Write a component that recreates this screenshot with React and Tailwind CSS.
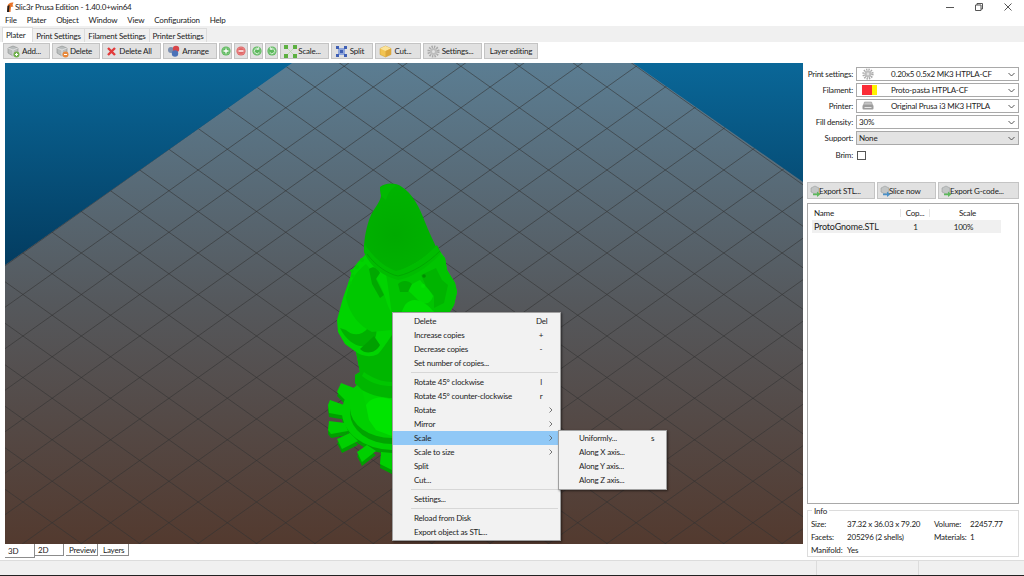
import React from "react";

const FONT = "font-['Lato','Noto_Sans',sans-serif]";

/* ================= SMALL ICONS ================= */
function Cube({ badge }) {
  return (
    <svg width="13" height="13" viewBox="0 0 13 13" className="shrink-0">
      <path d="M1 3l5-2 5 2v5l-5 3-5-3z" fill="#b9bdbd" stroke="#8b8f8f" strokeWidth=".6" />
      <path d="M1 3l5 2 5-2M6 5v6" fill="none" stroke="#efefef" strokeWidth=".7" />
      <circle cx="9.500" cy="9.500" r="3" fill={badge} />
      <path d="M8 9.500h3" stroke="#fff" strokeWidth="1" />
      {badge === "#6fb04a" && <path d="M9.500 8v3" stroke="#fff" strokeWidth="1" />}
    </svg>
  );
}

function CrossIcon() {
  return (
    <svg width="11" height="11" viewBox="0 0 11 11" className="shrink-0">
      <path d="M2 2l7 7M9 2l-7 7" stroke="#e23b3b" strokeWidth="2.400" />
    </svg>
  );
}

function ArrangeIcon() {
  return (
    <svg width="14" height="12" viewBox="0 0 14 12" className="shrink-0">
      <circle cx="4" cy="5" r="3" fill="#7b8fb0" />
      <circle cx="9" cy="4" r="3.200" fill="#d8474a" />
      <circle cx="8" cy="8.500" r="3.200" fill="#4a72b8" />
    </svg>
  );
}

function RoundIcon({ color, glyph }) {
  return (
    <svg width="10" height="10" viewBox="0 0 10 10">
      <circle cx="5" cy="5" r="4.600" fill={color} />
      <circle cx="5" cy="5" r="3.400" fill="none" stroke="#ffffff55" strokeWidth=".6" />
      {glyph === "plus" && <path d="M2.500 5h5M5 2.500v5" stroke="#fff" strokeWidth="1.300" />}
      {glyph === "minus" && <path d="M2.500 5h5" stroke="#fff" strokeWidth="1.400" />}
      {glyph === "ccw" && <path d="M7.200 6.400A2.600 2.600 0 1 1 6.400 2.800M6.600 1.200v2.200H4.400" fill="none" stroke="#dff3df" strokeWidth="1" />}
      {glyph === "cw" && <path d="M2.800 6.400A2.600 2.600 0 1 0 3.600 2.800M3.400 1.200v2.200h2.200" fill="none" stroke="#dff3df" strokeWidth="1" />}
    </svg>
  );
}

function ScaleIcon() {
  return (
    <svg width="13" height="13" viewBox="0 0 13 13" fill="#5cb040" className="shrink-0">
      <rect x="0" y="0" width="4" height="4" />
      <rect x="9" y="0" width="4" height="4" />
      <rect x="0" y="9" width="4" height="4" />
      <rect x="9" y="9" width="4" height="4" />
      <path d="M4 4l5 5M9 4l-5 5" stroke="#b7dcaa" strokeWidth=".8" />
    </svg>
  );
}

function SplitIcon() {
  return (
    <svg width="13" height="13" viewBox="0 0 13 13" className="shrink-0">
      <rect x="3" y="3" width="7" height="7" fill="#8fa6dc" />
      <g fill="#3f5fb4">
        <rect x="1" y="1" width="3" height="3" />
        <rect x="9" y="1" width="3" height="3" />
        <rect x="1" y="9" width="3" height="3" />
        <rect x="9" y="9" width="3" height="3" />
        <rect x="5" y="5" width="3" height="3" />
      </g>
    </svg>
  );
}

function BoxIcon() {
  return (
    <svg width="13" height="13" viewBox="0 0 13 13" className="shrink-0">
      <path d="M6.500 1l5.500 2.500v6L6.500 12 1 9.500v-6z" fill="#f2c452" stroke="#c99a2e" strokeWidth=".5" />
      <path d="M1 3.500L6.500 6 12 3.500 6.500 1z" fill="#fbe39a" />
      <path d="M6.500 6v6L12 9.500v-6z" fill="#dca63a" />
    </svg>
  );
}

function GearIcon({ size = 13 }) {
  return (
    <svg width={size} height={size} viewBox="0 0 13 13" className="shrink-0">
      <circle cx="6.500" cy="6.500" r="4.800" fill="none" stroke="#a9a9a9" strokeWidth="2.600" strokeDasharray="1.400 1.100" />
      <circle cx="6.500" cy="6.500" r="3.600" fill="#bdbdbd" />
      <circle cx="6.500" cy="6.500" r="1.500" fill="#e2e2e2" />
    </svg>
  );
}

function PrinterIcon() {
  return (
    <svg width="12" height="10" viewBox="0 0 12 10">
      <path d="M2.500 1h7l1 3h-9z" fill="#c4c4c4" stroke="#888" strokeWidth=".5" />
      <rect x=".5" y="4" width="11" height="4.500" rx="1" fill="#9c9c9c" />
      <rect x="2.500" y="6" width="7" height="1" fill="#e6e6e6" />
    </svg>
  );
}

function ExportIcon({ color }) {
  return (
    <svg width="12" height="12" viewBox="0 0 12 12" className="shrink-0">
      <path d="M1 3l4-2 4 2v4l-4 2-4-2z" fill="#c3c6c6" stroke="#8f9393" strokeWidth=".5" />
      <path d="M3 8.500h4V6.500l3.500 2.700L7 12v-1.800H3z" fill={color} />
    </svg>
  );
}

function Chevron() {
  return (
    <svg width="7" height="5" viewBox="0 0 7 5">
      <path d="M.5 1l3 3 3-3" fill="none" stroke="#444" strokeWidth=".9" />
    </svg>
  );
}

/* ================= TOOLBAR ================= */
function ToolBtn({ width, icon, label }) {
  return (
    <div className={`${width} h-[16px] shrink-0 flex items-center pl-[3px] bg-[#e1e1e1] border border-[#c4c4c4]`}>
      {icon}
      <span className={`flex-1 text-center whitespace-nowrap ${icon ? "pr-[6px]" : "pr-[3px]"}`}>{label}</span>
    </div>
  );
}

function SmallBtn({ width, icon }) {
  return (
    <div className={`${width} h-[16px] shrink-0 flex items-center justify-center bg-[#e1e1e1] border border-[#c4c4c4]`}>
      {icon}
    </div>
  );
}

function Toolbar() {
  return (
    <div className="h-[21px] pt-px pl-[3px] flex gap-[2px] bg-white">
      <ToolBtn width="w-[47px]" icon={<Cube badge="#6fb04a" />} label="Add..." />
      <ToolBtn width="w-[48px]" icon={<Cube badge="#e8883a" />} label="Delete" />
      <ToolBtn width="w-[59px]" icon={<CrossIcon />} label="Delete All" />
      <ToolBtn width="w-[54px]" icon={<ArrangeIcon />} label="Arrange" />
      <SmallBtn width="w-[13px]" icon={<RoundIcon color="#5cb85c" glyph="plus" />} />
      <SmallBtn width="w-[14px]" icon={<RoundIcon color="#e06666" glyph="minus" />} />
      <SmallBtn width="w-[13px]" icon={<RoundIcon color="#5cb85c" glyph="ccw" />} />
      <SmallBtn width="w-[13px]" icon={<RoundIcon color="#5cb85c" glyph="cw" />} />
      <ToolBtn width="w-[49px]" icon={<ScaleIcon />} label="Scale..." />
      <ToolBtn width="w-[42px]" icon={<SplitIcon />} label="Split" />
      <ToolBtn width="w-[46px]" icon={<BoxIcon />} label="Cut..." />
      <ToolBtn width="w-[59px]" icon={<GearIcon />} label="Settings..." />
      <ToolBtn width="w-[54px]" label="Layer editing" />
    </div>
  );
}

/* ================= 3D VIEW ================= */
const SLOPE = 0.7106;
const gridA = Array.from({ length: 40 }, (_, i) => -136.8 + (i - 24) * 41.5);
const gridB = Array.from({ length: 40 }, (_, i) => 310.8 + (i - 12) * 41.5);

const TEETH = [
  "341,383 354,388 358,398 346,401 337,392",
  "330,400 344,405 346,416 329,413 328,405",
  "329,421 345,423 348,431 331,434 328,430",
  "337,439 350,433 358,441 342,449",
  "357,452 367,445 376,451 362,462",
  "381,452 392,453 392,470 380,464",
];

function GearShape({ fill, dy }) {
  return (
    <g fill={fill} transform={`translate(0 ${dy})`}>
      {TEETH.map((t) => (
        <polygon key={t} points={t} />
      ))}
      <ellipse cx="392" cy="412" rx="50" ry="38" />
    </g>
  );
}

function Gnome() {
  return (
    <g>
      {/* gear */}
      <GearShape fill="#00a000" dy={4} />
      <GearShape fill="#00d000" dy={0} />
      <ellipse cx="392" cy="413" rx="42" ry="31" fill="#00a400" />
      <ellipse cx="392" cy="408" rx="42" ry="30" fill="#00d000" />

      {/* body */}
      <path
        d="M364 245L365 255L358 262L352 270L350 278L343 298L337 320L338 332L345 344L356 352L360 372L355 375L355 383L362 390L366 405L369 420L376 430L392 436V315H448L454 305L457 292L455 283L447 270L445 258L436 246Z"
        fill="#00d400"
      />
      <path d="M392 335C385 345 382 350 378 354C370 358 362 356 356 352L360 372L355 375L355 383L362 390C372 396 385 398 392 398Z" fill="#00b600" />
      <path d="M366 405C372 396 383 396 392 400V436L376 430L369 420Z" fill="#00e400" />
      <path d="M340 328C346 340 356 348 366 346C374 343 378 336 376 326L368 328C362 336 352 336 346 330Z" fill="#00b000" />
      <path d="M360 349C365 344 370 340 374 336L380 345C376 353 366 355 360 349Z" fill="#00a000" />
      <path d="M362 376C372 384 382 386 392 386V382C382 382 372 378 364 372Z" fill="#00c600" />

      {/* arm */}
      <path d="M346 298C348 285 355 272 366 264C373 272 382 285 386 300C388 308 392 312 392 316V330L372 332C360 326 350 316 346 298Z" fill="#00c800" />
      <path d="M369 269C374 265 378 268 380 273L376 279L384 295L380 298L372 284Z" fill="#00a800" />

      {/* beads on the shoulder */}
      <g fill="#00cc00">
        <circle cx="362" cy="260" r="2" />
        <circle cx="357" cy="267" r="2" />
        <circle cx="352" cy="271" r="1.800" />
        <circle cx="353" cy="276" r="1.800" />
        <circle cx="350" cy="283" r="1.800" />
      </g>

      {/* face */}
      <path d="M386 274C400 280 420 270 436 250L445 258L447 270L455 283L457 292L454 305L448 315H392C390 300 388 286 386 274Z" fill="#00c400" />
      <path d="M405 288C411 285 415 282 420 280C424 285 430 290 433 296C431 304 424 306 418 300C414 296 410 292 405 288Z" fill="#00d800" />
      <path d="M398 284C402 280 408 280 412 284L408 292L400 292Z" fill="#00ac00" />
      <path d="M421 275L436 268L442 280L448 285L444 303L434 308L434 296L426 286Z" fill="#00b400" />
      <path d="M405 305C412 296 424 300 432 310L438 315H400Z" fill="#00dc00" />
      <circle cx="424" cy="276" r="1.800" fill="#008f00" />
      <circle cx="423" cy="286" r="2" fill="#00e000" />

      {/* hat */}
      <path
        d="M380 187C385 183 395 182 402 187C412 193 420 208 425 222C429 232 433 240 436 247C425 258 410 268 396 272C384 268 372 258 364 246C365 232 368 222 371 215C375 207 381 201 381 195Z"
        fill="url(#hat)"
      />
      <path d="M380 188C385 184 392 183 396 186C392 188 388 192 386 200L381 196Z" fill="#00ba00" />
      {/* hat band */}
      <path
        d="M364 243C372 256 384 267 396 271C410 268 425 258 437 245L441 253C430 266 412 278 398 280C382 276 370 266 364 252Z"
        fill="#00bc00"
      />
      <path d="M367 254C376 266 388 274 398 276C412 273 428 263 440 251" fill="none" stroke="#00a200" strokeWidth=".8" />
    </g>
  );
}

function Viewport() {
  return (
    <div className="relative ml-[5px] w-[798px] h-[481px]">
      <svg width="798" height="481" viewBox="5 63 798 481" className="block">
        <defs>
          <linearGradient id="sky" gradientUnits="userSpaceOnUse" x1="0" y1="63" x2="0" y2="265">
            <stop offset="0" stopColor="#0a6798" />
            <stop offset="1" stopColor="#033c60" />
          </linearGradient>
          <linearGradient id="bed" gradientUnits="userSpaceOnUse" x1="0" y1="63" x2="0" y2="544">
            <stop offset="0" stopColor="#5b7d92" />
            <stop offset=".5" stopColor="#55585c" />
            <stop offset="1" stopColor="#533a2f" />
          </linearGradient>
          <radialGradient id="hat" gradientUnits="userSpaceOnUse" cx="395" cy="235" r="50">
            <stop offset="0" stopColor="#00aa00" />
            <stop offset="1" stopColor="#00b400" />
          </radialGradient>
          <clipPath id="bedClip">
            <polygon points="292,63 633,63 803,182 803,544 5,544 5,265" />
          </clipPath>
        </defs>
        <rect x="5" y="63" width="798" height="481" fill="url(#sky)" />
        <g clipPath="url(#bedClip)">
          <rect x="5" y="63" width="798" height="481" fill="url(#bed)" />
          <g stroke="#343434" strokeOpacity=".65" strokeWidth=".9">
            {gridA.map((c) => (
              <line key={c} x1="0" y1={c} x2="810" y2={c + 810 * SLOPE} />
            ))}
            {gridB.map((c) => (
              <line key={c} x1="0" y1={c} x2="810" y2={c - 810 * SLOPE} />
            ))}
          </g>
        </g>
        <Gnome />
      </svg>
      <ContextMenu />
    </div>
  );
}

/* ================= CONTEXT MENU ================= */
function MenuItem({ label, hint, arrow, active }) {
  return (
    <div className={`h-[14px] flex items-center pl-[21px] ${active ? "bg-[#90c8f6]" : ""}`}>
      <span className="w-[122px] whitespace-nowrap">{label}</span>
      <span className="w-[10px] text-center">{hint}</span>
      {arrow && (
        <svg width="4" height="6" viewBox="0 0 4 6" className="ml-[3px]">
          <path d="M.5.5L3 3 .5 5.500" fill="none" stroke="#555" strokeWidth=".8" />
        </svg>
      )}
    </div>
  );
}

function Sep() {
  return <div className="h-px my-[2px] ml-[18px] mr-[2px] bg-[#d7d7d7]" />;
}

function ContextMenu() {
  return (
    <div className="absolute left-[387px] top-[249px] w-[169px] h-[229px] py-[1px] bg-[#f2f2f2] border border-[#a0a0a0] shadow-[1px_1px_2px_rgba(0,0,0,0.5)]">
      <MenuItem label="Delete" hint="Del" />
      <MenuItem label="Increase copies" hint="+" />
      <MenuItem label="Decrease copies" hint="-" />
      <MenuItem label="Set number of copies..." />
      <Sep />
      <MenuItem label="Rotate 45° clockwise" hint="l" />
      <MenuItem label="Rotate 45° counter-clockwise" hint="r" />
      <MenuItem label="Rotate" arrow />
      <MenuItem label="Mirror" arrow />
      <MenuItem label="Scale" arrow active />
      <MenuItem label="Scale to size" arrow />
      <MenuItem label="Split" />
      <MenuItem label="Cut..." />
      <Sep />
      <MenuItem label="Settings..." />
      <Sep />
      <MenuItem label="Reload from Disk" />
      <MenuItem label="Export object as STL..." />

      <div className="absolute left-[165px] top-[117px] w-[109px] h-[60px] bg-[#f2f2f2] border border-[#a0a0a0] shadow-[1px_1px_2px_rgba(0,0,0,0.5)]">
        <div className="h-[14px] flex items-center pl-[20px]">
          <span className="w-[72px]">Uniformly...</span>
          <span>s</span>
        </div>
        <div className="h-[14px] flex items-center pl-[20px]">Along X axis...</div>
        <div className="h-[14px] flex items-center pl-[20px]">Along Y axis...</div>
        <div className="h-[14px] flex items-center pl-[20px]">Along Z axis...</div>
      </div>
    </div>
  );
}

/* ================= RIGHT PANEL ================= */
function Combo({ label, icon, value, plain, grey }) {
  return (
    <div className="h-[14px] flex items-center">
      <span className="w-[50px] text-right whitespace-nowrap">{label}:</span>
      <div className={`ml-[3px] w-[163px] h-full flex items-center border border-[#a9a9a9] ${grey ? "bg-[#e3e3e3]" : "bg-white"}`}>
        {plain ? (
          <span className="flex-1 pl-[2px]">{value}</span>
        ) : (
          <>
            <span className="w-[34px] pl-[5px] flex items-center">{icon}</span>
            <span className="flex-1 whitespace-nowrap">{value}</span>
          </>
        )}
        <span className="mr-[3px] flex">
          <Chevron />
        </span>
      </div>
    </div>
  );
}

function ExportBtn({ width, icon, label }) {
  return (
    <div className={`${width} h-[17px] flex items-center pl-[2px] bg-[#e1e1e1] border border-[#c4c4c4] whitespace-nowrap`}>
      {icon}
      <span className="-ml-[3px]">{label}</span>
    </div>
  );
}

function InfoRow({ a, b, c, d }) {
  return (
    <div className="h-[13px] flex items-center">
      <span className="w-[36px]">{a}</span>
      <span className="w-[87px] whitespace-nowrap">{b}</span>
      <span className="w-[36px]">{c}</span>
      <span>{d}</span>
    </div>
  );
}

function SidePanel() {
  return (
    <div className="w-[221px] shrink-0 bg-white pt-[25px] flex flex-col">
      <div className="flex flex-col gap-[2px]">
        <Combo label="Print settings" icon={<GearIcon size={12} />} value="0.20x5 0.5x2 MK3 HTPLA-CF" />
        <Combo
          label="Filament"
          icon={
            <span className="flex">
              <span className="w-[10px] h-[10px] bg-[#fb2c36]" />
              <span className="w-[5px] h-[10px] bg-[#fff200]" />
            </span>
          }
          value="Proto-pasta HTPLA-CF"
        />
        <Combo label="Printer" icon={<PrinterIcon />} value="Original Prusa i3 MK3 HTPLA" />
        <Combo label="Fill density" value="30%" plain />
        <Combo label="Support" value="None" plain grey />
      </div>
      <div className="mt-[4px] h-[12px] flex items-center">
        <span className="w-[50px] text-right">Brim:</span>
        <span className="ml-[4px] w-[9px] h-[9px] border border-[#555] bg-white" />
      </div>

      <div className="mt-[21px] ml-[4px] flex gap-[2px]">
        <ExportBtn width="w-[68px]" icon={<ExportIcon color="#5cb85c" />} label="Export STL..." />
        <ExportBtn width="w-[59px]" icon={<ExportIcon color="#4a90c8" />} label="Slice now" />
        <ExportBtn width="w-[81px]" icon={<ExportIcon color="#5cb85c" />} label="Export G-code..." />
      </div>

      <div className="mt-[4px] ml-[4px] w-[212px] h-[301px] border border-[#a9a9a9] p-[1px] bg-white">
        <div className="flex h-[15px] items-center w-[193px] ml-[3px]">
          <span className="w-[89px] pl-[2px] border-r border-[#e5e5e5]">Name</span>
          <span className="w-[29px] text-center border-r border-[#e5e5e5]">Cop...</span>
          <span className="flex-1 text-center">Scale</span>
        </div>
        <div className="flex h-[13px] items-center w-[189px] ml-[3px] bg-[#f0f0f0]">
          <span className="w-[89px] pl-[2px] text-[9px]">ProtoGnome.STL</span>
          <span className="w-[29px] text-center">1</span>
          <span className="flex-1 text-center pr-[4px]">100%</span>
        </div>
      </div>

      <div className="relative mt-[6px] ml-[4px] w-[212px] h-[47px] border border-[#dcdcdc] pt-[6px] pl-[3px]">
        <span className="absolute left-[4px] top-[-4px] px-[2px] bg-white">Info</span>
        <InfoRow a="Size:" b="37.32 x 36.03 x 79.20" c="Volume:" d="22457.77" />
        <InfoRow a="Facets:" b="205296 (2 shells)" c="Materials:" d="1" />
        <InfoRow a="Manifold:" b="Yes" />
      </div>
    </div>
  );
}

/* ================= PAGE ================= */
function ViewTab({ width, height, label }) {
  return (
    <div className={`${width} ${height} pl-[3px] bg-white border-r border-b border-[#8c8c8c] flex items-center`}>
      {label}
    </div>
  );
}

function SettingsTab({ width, label }) {
  return (
    <div className={`${width} h-[14px] flex items-center justify-center whitespace-nowrap border-t border-r border-[#dcdcdc]`}>
      {label}
    </div>
  );
}

export default function App() {
  return (
    <div className={`${FONT} relative w-[1024px] h-[576px] overflow-hidden bg-white text-[8px] tracking-[-0.2px] leading-none text-[#222]`}>
      {/* TITLE */}
      <div className="h-[14px] flex items-center pl-[6px]">
        <svg width="8" height="11" viewBox="0 0 8 11">
          <path d="M1 10L1.500 4C2 1.500 4.500 0 7.500.500L6.500 3 7.500 4.500 5 5 4.500 10z" fill="#e8742a" />
          <path d="M1 10L1.500 4 3.500 3 3 10z" fill="#222" />
        </svg>
        <span className="ml-[1px]">Slic3r Prusa Edition - 1.40.0+win64</span>
        <div className="ml-auto flex items-center">
          <svg width="8" height="8" viewBox="0 0 8 8" className="mr-[21px]">
            <path d="M0 4.500h8" stroke="#555" strokeWidth="1" />
          </svg>
          <svg width="8" height="8" viewBox="0 0 8 8" className="mr-[21px]">
            <path d="M.5 2h5.500v5.500H.5zM2 2V.5h5.500V6H6" fill="none" stroke="#555" strokeWidth="1" />
          </svg>
          <svg width="8" height="8" viewBox="0 0 8 8" className="mr-[12px]">
            <path d="M.5.5l7 7M7.500.5l-7 7" stroke="#555" strokeWidth="1" />
          </svg>
        </div>
      </div>

      {/* MENU */}
      <div className="h-[12px] flex items-center pl-[5px] gap-[10px]">
        {["File", "Plater", "Object", "Window", "View", "Configuration", "Help"].map((m) => (
          <span key={m}>{m}</span>
        ))}
      </div>

      {/* TABS */}
      <div className="h-[16px] bg-[#f0f0f0] flex items-end pl-[2px]">
        <div className="w-[31px] h-[15px] bg-white pl-[3px] flex items-center border-t border-x border-[#dcdcdc]">Plater</div>
        <SettingsTab width="w-[52px]" label="Print Settings" />
        <SettingsTab width="w-[65px]" label="Filament Settings" />
        <SettingsTab width="w-[57px]" label="Printer Settings" />
      </div>

      {/* MAIN */}
      <div className="h-[518px] flex bg-white">
        <div className="w-[803px] shrink-0 flex flex-col">
          <Toolbar />
          <Viewport />
          <div className="h-[16px] ml-[5px] flex items-start">
            <ViewTab width="w-[30px]" height="h-[14px]" label="3D" />
            <ViewTab width="w-[29px]" height="h-[12px]" label="2D" />
            <div className="w-[2px]" />
            <ViewTab width="w-[32px]" height="h-[12px]" label="Preview" />
            <div className="w-[2px]" />
            <ViewTab width="w-[29px]" height="h-[12px]" label="Layers" />
          </div>
        </div>
        <SidePanel />
      </div>

      {/* STATUS */}
      <div className="h-[15px] bg-[#f0f0f0] border-t border-[#dcdcdc] flex">
        <div className="w-[817px] border-r border-[#dcdcdc]" />
        <div className="w-[102px] border-r border-[#dcdcdc]" />
      </div>
      <div className="h-px bg-[#222]" />
    </div>
  );
}
